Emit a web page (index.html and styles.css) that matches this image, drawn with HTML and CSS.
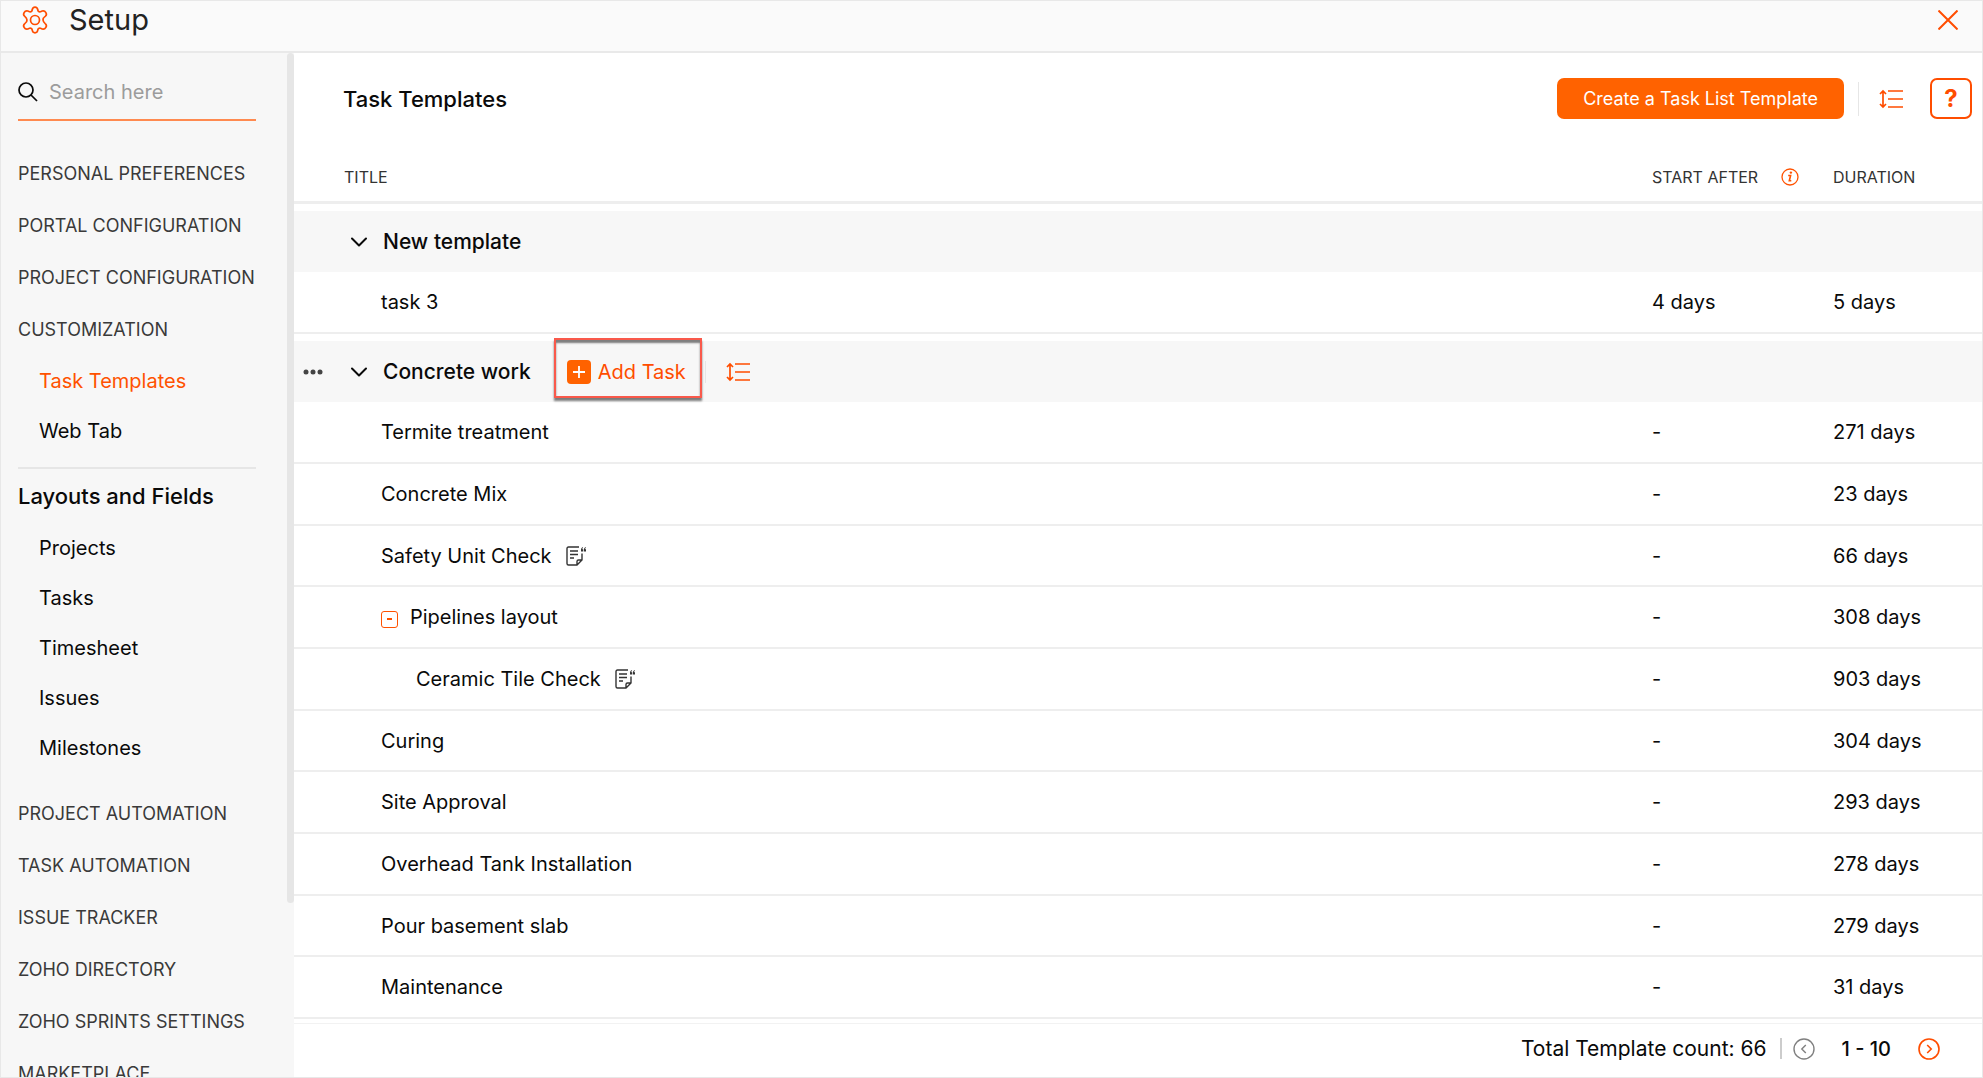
FILE: index.html
```html
<!DOCTYPE html>
<html lang="en">
<head>
  <meta charset="UTF-8" />
  <meta name="viewport" content="width=device-width, initial-scale=1.0" />
  <title>Setup - Task Templates</title>
  <link rel="stylesheet" href="styles.css">
</head>
<body>

  <!-- Shared icons -->
  <svg class="icon-defs" width="0" height="0" aria-hidden="true">
    <symbol id="icon-reorder" viewBox="0 0 24 20">
      <path d="M4 2v16M1 5l3-3 3 3M1 15l3 3 3-3M9 2h15M9 10h15M9 18h15" fill="none" stroke="currentColor" stroke-width="1.7"/>
    </symbol>
    <symbol id="icon-chevron" viewBox="0 0 16 10">
      <path d="M1 1.5l7 7 7-7" fill="none" stroke="currentColor" stroke-width="2" stroke-linecap="round" stroke-linejoin="round"/>
    </symbol>
    <symbol id="icon-note" viewBox="0 0 20 20">
      <path d="M13 1H2.5Q1 1 1 2.500V17.500Q1 19 2.500 19H11L16 14V7.500M11 19V15.500Q11 14 12.500 14H16M4 5h8M4 8.500h8M4 12h4" fill="none" stroke="currentColor" stroke-width="1.400"/>
      <path d="M17 1q-2 .6-2 2.500V5.500h2.200V3.200h-.8Q16.200 2.200 17 1.800zM19.900 1q-2 .6-2 2.500V5.500h2.100V3.200h-.8Q19 2.200 19.900 1.800z" fill="currentColor"/>
    </symbol>
  </svg>

  <div class="app">
    <header class="topbar">
      <svg class="gear" viewBox="0 0 28 28" fill="none" stroke="currentColor" stroke-width="1.700" stroke-linejoin="round" aria-hidden="true">
        <path d="M11.200 4Q11.600 1.200 14 1.200T16.800 4Q17.200 6.300 19.500 5.700L21.200 5Q23.600 4.400 24.900 6.700T24.200 10.400Q21.800 12 22 14T24.200 17.600Q26.200 19 24.900 21.300T21.200 23L19.500 22.300Q17.200 21.700 16.800 24Q16.400 26.800 14 26.800T11.200 24Q10.800 21.700 8.500 22.300L6.800 23Q4.400 23.600 3.100 21.300T3.800 17.600Q6.200 16 6 14T3.800 10.400Q1.800 9 3.100 6.700T6.800 5L8.500 5.700Q10.800 6.300 11.200 4z"/>
        <circle cx="14" cy="14" r="4.500"/>
      </svg>
      <h1>Setup</h1>
      <button class="close" type="button" aria-label="Close">
        <svg viewBox="0 0 20 20" width="20" height="20"><path d="M0.500 0.500l19 19M19.500 0.500l-19 19" stroke="currentColor" stroke-width="2"/></svg>
      </button>
    </header>

    <div class="layout">
      <aside class="sidebar">
        <div class="search">
          <label for="search" aria-label="Search">
            <svg viewBox="0 0 20 20" width="20" height="20" fill="none" stroke="currentColor" stroke-width="1.700"><circle cx="8" cy="8" r="7"/><path d="M13 13l6 6"/></svg>
          </label>
          <input id="search" type="text" placeholder="Search here">
        </div>
        <nav class="menu">
          <a class="section" href="#">PERSONAL PREFERENCES</a>
          <a class="section" href="#">PORTAL CONFIGURATION</a>
          <a class="section" href="#">PROJECT CONFIGURATION</a>
          <a class="section" href="#">CUSTOMIZATION</a>
          <a class="item active" href="#">Task Templates</a>
          <a class="item" href="#">Web Tab</a>
          <h2 class="menu-title">Layouts and Fields</h2>
          <a class="item" href="#">Projects</a>
          <a class="item" href="#">Tasks</a>
          <a class="item" href="#">Timesheet</a>
          <a class="item" href="#">Issues</a>
          <a class="item" href="#">Milestones</a>
          <div class="menu-more">
            <a class="section" href="#">PROJECT AUTOMATION</a>
            <a class="section" href="#">TASK AUTOMATION</a>
            <a class="section" href="#">ISSUE TRACKER</a>
            <a class="section" href="#">ZOHO DIRECTORY</a>
            <a class="section" href="#">ZOHO SPRINTS SETTINGS</a>
            <a class="section" href="#">MARKETPLACE</a>
          </div>
        </nav>
        <div class="scroll-thumb"></div>
      </aside>

      <main class="content">
        <div class="page-head">
          <h2>Task Templates</h2>
          <button class="btn-create" type="button">Create a Task List Template</button>
          <span class="divider"></span>
          <button class="icon-btn" type="button" aria-label="Reorder"><svg width="24" height="20"><use href="#icon-reorder"/></svg></button>
          <button class="btn-help" type="button" aria-label="Help">?</button>
        </div>

        <div class="table-area">
          <table class="templates">
            <thead>
              <tr>
                <th class="col-title">TITLE</th>
                <th class="col-start">
                  <div class="th-start">START AFTER
                    <svg class="info" viewBox="0 0 18 18" width="18" height="18" aria-hidden="true"><circle cx="9" cy="9" r="8" fill="none" stroke="currentColor" stroke-width="1.300"/><path d="M7.200 7.500h2.400l-1.300 5.300h2" fill="none" stroke="currentColor" stroke-width="1.600"/><circle cx="9.900" cy="4.600" r="1.200" fill="currentColor"/></svg>
                  </div>
                </th>
                <th class="col-duration">DURATION</th>
              </tr>
            </thead>
            <tbody>
              <tr class="group">
                <td colspan="3">
                  <div class="group-head">
                    <span class="dots-space"></span>
                    <button class="toggle" type="button" aria-label="Collapse"><svg width="16" height="10"><use href="#icon-chevron"/></svg></button>
                    <span class="group-name">New template</span>
                  </div>
                </td>
              </tr>
              <tr><td>task 3</td><td>4 days</td><td>5 days</td></tr>
            </tbody>
            <tbody>
              <tr class="group">
                <td colspan="3">
                  <div class="group-head">
                    <button class="dots" type="button" aria-label="More"><svg viewBox="0 0 20 6" width="20" height="6" fill="currentColor"><circle cx="3" cy="3" r="2.500"/><circle cx="10" cy="3" r="2.500"/><circle cx="17" cy="3" r="2.500"/></svg></button>
                    <button class="toggle" type="button" aria-label="Collapse"><svg width="16" height="10"><use href="#icon-chevron"/></svg></button>
                    <span class="group-name">Concrete work</span>
                    <button class="add-task" type="button">
                      <svg viewBox="0 0 24 24" width="24" height="24"><rect width="24" height="24" rx="4" fill="#ff6200"/><path d="M12 6v12M6 12h12" stroke="#fff" stroke-width="1.800"/></svg>
                      Add Task
                    </button>
                    <span class="divider short"></span>
                    <button class="icon-btn" type="button" aria-label="Reorder"><svg width="24" height="20"><use href="#icon-reorder"/></svg></button>
                  </div>
                </td>
              </tr>
              <tr><td>Termite treatment</td><td>-</td><td>271 days</td></tr>
              <tr><td>Concrete Mix</td><td>-</td><td>23 days</td></tr>
              <tr><td><div class="task">Safety Unit Check<svg class="note" width="20" height="20"><use href="#icon-note"/></svg></div></td><td>-</td><td>66 days</td></tr>
              <tr><td><div class="task"><button class="subtasks" type="button" aria-label="Collapse subtasks"></button>Pipelines layout</div></td><td>-</td><td>308 days</td></tr>
              <tr><td class="child"><div class="task">Ceramic Tile Check<svg class="note" width="20" height="20"><use href="#icon-note"/></svg></div></td><td>-</td><td>903 days</td></tr>
              <tr><td>Curing</td><td>-</td><td>304 days</td></tr>
              <tr><td>Site Approval</td><td>-</td><td>293 days</td></tr>
              <tr><td>Overhead Tank Installation</td><td>-</td><td>278 days</td></tr>
              <tr><td>Pour basement slab</td><td>-</td><td>279 days</td></tr>
              <tr><td>Maintenance</td><td>-</td><td>31 days</td></tr>
            </tbody>
          </table>
        </div>

        <footer class="pager">
          <span>Total Template count: 66</span>
          <span class="pager-line"></span>
          <button class="page-btn" type="button" aria-label="Previous page" disabled><svg viewBox="0 0 22 22" width="22" height="22" fill="none" stroke="currentColor" stroke-width="1.400"><circle cx="11" cy="11" r="10"/><path d="M12.800 7l-4 4 4 4"/></svg></button>
          <strong>1 - 10</strong>
          <button class="page-btn" type="button" aria-label="Next page"><svg viewBox="0 0 22 22" width="22" height="22" fill="none" stroke="currentColor" stroke-width="1.600"><circle cx="11" cy="11" r="10"/><path d="M9.200 7l4 4-4 4"/></svg></button>
        </footer>
      </main>
    </div>
  </div>

</body>
</html>
```
FILE: styles.css
```css
* {
  box-sizing: border-box;
}

body {
  margin: 0;
  font-family: Inter, "Open Sans", sans-serif;
  font-size: 20px;
  color: #0a0a0a;
  background-color: #fff;
}

h1, h2 {
  margin: 0;
  font-weight: 500;
}

a {
  color: inherit;
  text-decoration: none;
}

button {
  display: flex;
  align-items: center;
  justify-content: center;
  padding: 0;
  border: none;
  background: none;
  font: inherit;
  color: #ff4d00;
  cursor: pointer;
}

svg {
  flex-shrink: 0;
}

.icon-defs {
  position: absolute;
}

.app {
  display: flex;
  flex-direction: column;
  height: 100vh;
  border: 1px solid #e8e8e8;
  overflow: hidden;
}

/* Top bar */
.topbar {
  display: flex;
  align-items: center;
  flex-shrink: 0;
  height: 52px;
  padding: 0 24px 12px 20px;
  background-color: #fafafa;
  border-bottom: 2px solid #e9e9e9;
}

.gear {
  width: 28px;
  height: 28px;
  margin-right: 20px;
  color: #ff4d00;
}

.topbar h1 {
  font-size: 29px;
  font-weight: 400;
  line-height: 36px;
  color: #222;
}

.close {
  margin-left: auto;
}

.layout {
  display: flex;
  flex: 1;
  min-height: 0;
}

/* Sidebar */
.sidebar {
  position: relative;
  flex-shrink: 0;
  width: 293px;
  padding: 12px 38px 0 17px;
  background-color: #f7f7f7;
  overflow: hidden;
}

.search {
  display: flex;
  align-items: center;
  gap: 11px;
  height: 56px;
  border-bottom: 2px solid #ff8a50;
}

.search label {
  display: flex;
}

.search input {
  flex: 1;
  min-width: 0;
  padding: 0;
  border: none;
  outline: none;
  background: none;
  font: inherit;
}

.search input::placeholder {
  color: #9c9c9c;
}

.menu {
  padding-top: 27px;
}

.section,
.item {
  display: block;
  white-space: nowrap;
}

.section {
  font-size: 18px;
  line-height: 52px;
  color: #3a3a3a;
}

.item {
  padding-left: 21px;
  line-height: 50px;
}

.item.active {
  color: #ff5200;
}

.menu-title {
  margin-top: 11px;
  border-top: 2px solid #e6e6e6;
  font-size: 22px;
  line-height: 54px;
}

.menu-more {
  margin-top: 15px;
}

.scroll-thumb {
  position: absolute;
  top: 0;
  right: 0;
  width: 7px;
  height: 83%;
  border-radius: 4px;
  background-color: #e6e6e6;
}

/* Content */
.content {
  display: flex;
  flex-direction: column;
  flex: 1;
  min-width: 0;
}

.page-head {
  display: flex;
  align-items: center;
  flex-shrink: 0;
  height: 91px;
  padding: 0 10px 0 49px;
}

.page-head h2 {
  margin-right: auto;
  font-size: 22px;
}

.btn-create {
  height: 41px;
  padding: 0 26px;
  border-radius: 7px;
  background-color: #ff6200;
  color: #fff;
  font-size: 18px;
}

.divider {
  width: 1px;
  height: 34px;
  margin: 0 20px 0 14px;
  background-color: #e6e6e6;
}

.btn-help {
  width: 42px;
  height: 41px;
  margin-left: 27px;
  border: 2px solid #ff4d00;
  border-radius: 7px;
  font-size: 24px;
  font-weight: 700;
}

/* Templates table */
.table-area {
  flex: 1;
  min-height: 0;
  overflow: hidden;
}

.templates {
  width: 100%;
  border-collapse: separate;
  border-spacing: 0;
  table-layout: fixed;
}

.templates th {
  height: 60px;
  padding: 8px 0 0;
  border-bottom: 3px solid #eee;
  font-size: 16px;
  font-weight: 400;
  text-align: left;
  color: #333;
}

.templates .col-title {
  padding-left: 50px;
}

.col-start {
  width: 181px;
}

.col-duration {
  width: 149px;
}

.th-start {
  display: flex;
  align-items: center;
  justify-content: space-between;
  padding-right: 34px;
}

.info {
  color: #ff5200;
}

/* gap above every template group */
.templates tbody::before {
  content: "";
  display: block;
  height: 7px;
}

.templates td {
  height: 62px;
  padding: 0;
  border-bottom: 2px solid #eee;
}

.templates tr:nth-child(3n+1) td {
  height: 61px;
}

.templates td:first-child {
  padding-left: 87px;
}

.templates td.child {
  padding-left: 122px;
}

.templates .group td:first-child {
  padding-left: 9px;
  border-bottom: none;
  background-color: #f7f7f7;
}

.group-head,
.task {
  display: flex;
  align-items: center;
}

.dots,
.dots-space {
  width: 20px;
  margin-right: 28px;
}

.dots {
  color: #444;
}

.toggle {
  margin-right: 16px;
  color: #0a0a0a;
}

.group-name {
  font-size: 21px;
  font-weight: 500;
}

.add-task {
  position: relative;
  gap: 7px;
  margin: 0 3px 0 36px;
  padding-right: 16px;
}

.add-task::after {
  content: "";
  position: absolute;
  inset: -22px 0 -14px -13px;
  border: 2px solid #f9594b;
  box-shadow: 0 3px 2px rgba(0, 0, 0, 0.5), inset 0 3px 2px rgba(0, 0, 0, 0.5);
}

.divider.short {
  height: 22px;
  margin-left: 0;
}

.note {
  margin-left: 14px;
  color: #333;
}

.subtasks {
  width: 17px;
  height: 17px;
  margin: 4px 12px 0 0;
  border: 1px solid #ff5200;
  border-radius: 3px;
}

.subtasks::before {
  content: "";
  width: 5px;
  height: 2px;
  background-color: #ff5200;
}

/* Footer */
.pager {
  display: flex;
  align-items: center;
  justify-content: flex-end;
  flex-shrink: 0;
  height: 54px;
  padding: 0 42px 4px 0;
  border-top: 1px solid #f2f2f2;
  font-size: 21px;
}

.pager-line {
  width: 2px;
  height: 21px;
  margin: 0 11px 0 13px;
  background-color: #ccc;
}

.pager strong {
  margin: 0 27px;
  font-size: 20px;
  font-weight: 500;
}

.page-btn:disabled {
  color: #808080;
}
```
